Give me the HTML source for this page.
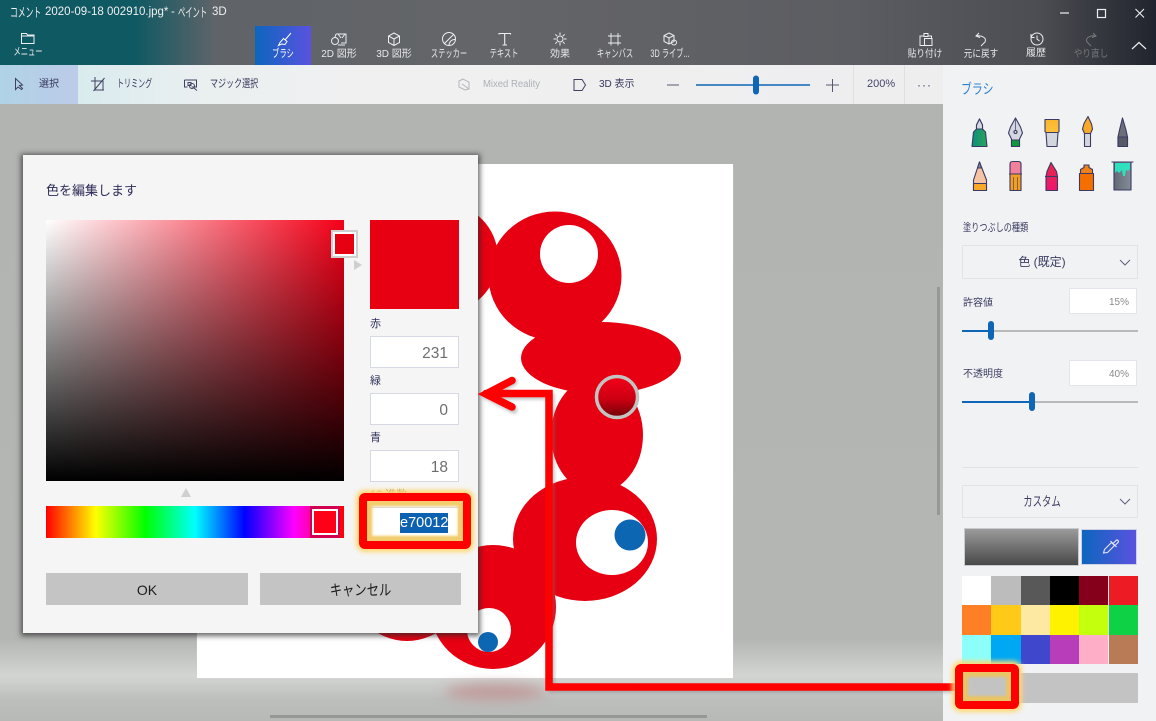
<!DOCTYPE html>
<html lang="ja"><head><meta charset="utf-8"><title>ペイント 3D</title>
<style>
*{box-sizing:border-box}
html,body{margin:0;padding:0;width:1156px;height:721px;overflow:hidden;background:#b3b5b3}
body{font-family:"Liberation Sans","Noto Sans CJK JP",sans-serif;position:relative}
.a{position:absolute}
.t{position:absolute;white-space:nowrap;line-height:1}
.top{left:0;top:0;width:1156px;height:65px;background:linear-gradient(90deg,#0f5963 0,#0f5963 135px,#5f6469 215px,#646568 500px,#5c5d62 850px,#4c4d52 1040px,#20242d 1156px)}
.tab{color:#e8e8ea;font-size:10px;text-align:center;width:60px;top:50px}
.k7{transform:scaleX(.66);font-size:11px}
.k8{transform:scaleX(.86)}
.sub{left:0;top:65px;width:943px;height:39px;background:linear-gradient(90deg,#b9dbe6 0,#d9ebee 75px,#e9eff0 190px,#f0f0f1 350px,#eeeeef 943px)}
.lbl{color:#36365a;font-size:10px;top:80px;transform-origin:0 50%}
.dlg{left:23px;top:155px;width:455px;height:478px;background:#f5f5f5;box-shadow:0 1px 5px 2px rgba(40,40,40,.7)}
.inp{background:#fff;border:1px solid #d6d9e4;left:370px;width:89px;height:32px;color:#6e6e6e;font-size:15.5px;text-align:right;padding:7px 10px 0 0;line-height:20px}
.dl{left:370px;font-size:11px;color:#30305a}
.btn{background:#c4c4c4;height:32px;top:573px;font-size:14px;color:#1c1c1c;text-align:center;line-height:34px}
.pan{left:943px;top:65px;width:213px;height:656px;background:#f1f2f4}
.pl{font-size:10px;color:#3c3c60;transform-origin:0 50%}
.sw{width:29.3px;height:29.3px;position:absolute}
.box{background:#fff;border:1px solid #e3e5ea;color:#8a8a8a;font-size:10px;text-align:right;padding-right:7px;left:1069px;width:68px;height:26px;line-height:27px}
svg{position:absolute;overflow:visible}
</style></head><body>

<!-- canvas bg -->
<div class="a" style="left:0;top:104px;width:943px;height:617px;background:linear-gradient(180deg,#b2b4b2 0,#b4b6b4 535px,#d3d5d2 572px,#bdbfbd 595px,#b7b9b7 617px)"></div>
<div class="a" style="left:197px;top:164px;width:536px;height:514px;background:#fff;box-shadow:0 1px 1px #d5d5d5"></div>
<div class="a" style="left:445px;top:684px;width:100px;height:16px;border-radius:50%;background:#c09a9a;filter:blur(6px)"></div>
<div class="a" style="left:270px;top:715px;width:437px;height:3px;background:#969896"></div>
<div class="a" style="left:937px;top:287px;width:3px;height:228px;background:#969896"></div>

<!-- art -->
<svg style="left:0;top:0" width="1156" height="721" viewBox="0 0 1156 721">
<g fill="#e60012">
<circle cx="443" cy="258" r="55"/>
<circle cx="407" cy="584" r="57"/>
<ellipse cx="555" cy="276" rx="66.500" ry="64.500"/>
<ellipse cx="601" cy="358" rx="80" ry="36"/>
<ellipse cx="597" cy="435" rx="46" ry="58"/>
<ellipse cx="585" cy="539" rx="72" ry="62"/>
<ellipse cx="493" cy="607" rx="63" ry="62"/>
</g>
<circle cx="569" cy="254" r="29" fill="#fff"/>
<ellipse cx="612" cy="542.500" rx="36" ry="32.500" fill="#fff"/>
<circle cx="630" cy="535" r="15.500" fill="#0d66b2"/>
<circle cx="489" cy="630" r="22" fill="#fff"/>
<circle cx="488" cy="642" r="10" fill="#0d66b2"/>
<defs><linearGradient id="g1" x1="0" y1="0" x2="0" y2="1"><stop offset="0" stop-color="#f40018"/><stop offset=".55" stop-color="#cc0012"/><stop offset="1" stop-color="#6e0008"/></linearGradient></defs>
<circle cx="617" cy="397" r="20.500" fill="url(#g1)" stroke="#c2c4c2" stroke-width="3.500"/>
</svg>

<!-- top bar -->
<div class="a top"></div>
<div class="t" style="left:10px;top:6px;color:#f0f0f0;font-size:13px;transform:scaleX(.6);transform-origin:0 50%">コメント</div>
<div class="t" style="left:45px;top:7px;color:#f0f0f0;font-size:11.500px">2020-09-18 002910.jpg*</div>
<div class="t" style="left:171px;top:7px;color:#f0f0f0;font-size:11.500px">-</div>
<div class="t" style="left:178px;top:6px;color:#f0f0f0;font-size:13px;transform:scaleX(.56);transform-origin:0 50%">ペイント</div>
<div class="t" style="left:212px;top:7px;color:#f0f0f0;font-size:11.500px">3D</div>
<div class="a" style="left:255px;top:26px;width:56px;height:39px;background:linear-gradient(90deg,#0c66bd,#5a52e0)"></div>

<svg style="left:0;top:0" width="1156" height="65" viewBox="0 0 1156 65" fill="none" stroke="#eceef0" stroke-width="1">
<path d="M21.500 43.500v-10h5l1 1.500h6.500v8.500zM21.500 36h12.500"/>
<path d="M291 33l-6 7M283.500 38.500l3.500 3-2 3-3.500-.5-3 1.500 1.500-3z" stroke="#fff"/>
<path d="M336 34h10v9h-5M336 34l-1 3M345 34l-3 4M338 34l3 4"/><circle cx="335" cy="41" r="3.500"/>
<path d="M338 45h7"/>
<path d="M394 33l5.500 3v6.500l-5.500 3-5.500-3V36zM388.500 36l5.500 3 5.500-3M394 39v6.500"/>
<circle cx="449" cy="39" r="6.500"/><path d="M444.500 43.500l9-9M449 45.500c0-3 2-6 6-6"/>
<path d="M499 34.500v-1h11.500v1M504.700 33.500v11.500M502.500 45h4.500" stroke-width="1.100"/>
<circle cx="560" cy="39" r="3"/><path d="M560 32.500V35M560 43v2.500M553.500 39h2.500M564 39h2.500M555.400 34.400l1.800 1.800M562.800 41.800l1.800 1.800M564.600 34.400l-1.800 1.800M557.200 41.800l-1.800 1.800"/>
<path d="M611 36h7v7h-7zM611 33v12.500M618 33v12.500M608 36h13M608 43h13" stroke-width=".9"/>
<path d="M669 33l5 2.500v6l-5 2.500-5-2.500v-6zM664 35.500l5 2.500 5-2.500M669 38v6"/><circle cx="674" cy="42.500" r="2.500"/>
<path d="M923.500 36h-3.500v9.500h4M924 33.500h4v3h-4zM928.500 36h3v2M924.500 38.500h7.500v7h-7.500z"/>
<path d="M979 33l-3 3 4 1.500M976 36c6-1 11 2 9 6l-4 4"/>
<circle cx="1037" cy="39" r="6"/><path d="M1031 34v3.500h3.500M1037 35.500v3.500l2.500 2"/>
<path d="M1093 33l3 3-4 1.500M1096 36c-6-1-11 2-9 6l4 4" stroke="#77797d"/>
<path d="M1132 49l7-6.500 7 6.500" stroke-width="1.200"/>
<path d="M1060 13h9" stroke-width="1.200"/><rect x="1097.500" y="9.500" width="8" height="8" stroke-width="1.200"/><path d="M1144 9l-8.500 8.500M1135.500 9l8.500 8.500" stroke-width="1.100"/>
</svg>

<div class="t tab k7" style="left:-2px;top:47px">メニュー</div>
<div class="t tab k7" style="left:253px;top:49px;color:#fff">ブラシ</div>
<div class="t tab" style="left:309px;top:50px">2D 図形</div>
<div class="t tab" style="left:364px;top:50px">3D 図形</div>
<div class="t tab k7" style="left:419px;top:49px">ステッカー</div>
<div class="t tab k7" style="left:474px;top:49px">テキスト</div>
<div class="t tab" style="left:530px;top:50px">効果</div>
<div class="t tab k7" style="left:585px;top:49px">キャンバス</div>
<div class="t tab k7" style="left:640px;top:49px">3D ライブ...</div>
<div class="t tab k8" style="left:895px;top:50px">貼り付け</div>
<div class="t tab k8" style="left:951px;top:50px">元に戻す</div>
<div class="t tab" style="left:1006px;top:49px">履歴</div>
<div class="t tab k8" style="left:1061px;top:50px;color:#74767a">やり直し</div>

<!-- sub bar -->
<div class="a sub"></div>
<div class="a" style="left:0;top:65px;width:78px;height:39px;background:linear-gradient(90deg,#b0d3e6,#bccbe9)"></div>
<div class="a" style="left:853px;top:65px;width:1px;height:39px;background:#dfe0e3"></div>
<div class="a" style="left:904px;top:65px;width:1px;height:39px;background:#dfe0e3"></div>
<div class="t lbl" style="left:39px">選択</div>
<div class="t lbl" style="left:117px;font-size:11px;top:79px;transform:scaleX(.64)">トリミング</div>
<div class="t lbl" style="left:210px;font-size:11px;top:79px;transform:scaleX(.73)">マジック選択</div>
<div class="t lbl" style="left:483px;color:#aeb0b6;transform:scaleX(.95)">Mixed Reality</div>
<div class="t lbl" style="left:599px">3D 表示</div>
<div class="t" style="left:867px;top:79px;color:#45456a;font-size:11px;width:30px">200%</div>
<div class="t" style="left:917px;top:79px;color:#45456a;font-size:12px;letter-spacing:1px">···</div>
<svg style="left:0;top:65px" width="943" height="39" viewBox="0 65 943 39" fill="none" stroke="#40405f" stroke-width="1">
<path d="M15.500 78.500v11l2.500-2.500 3.500 2.500 1-1-3-3 3-.5z"/>
<path d="M91 81h12v9M95 77v13h9M104.500 78l-11 13"/>
<path d="M184.500 80h12v7h-5M184.500 80v7h3M188 82.500h3v3h-3z"/><circle cx="192" cy="86" r="2.500"/><path d="M194 88l3 2.500"/>
<path d="M459 81l4-2 6 3v7l-4 1-6-3zM462 84l7 5" stroke="#b4b6bc"/>
<path d="M574 79.500h8l3.500 5.500-3.500 5.500h-8z"/>
<path d="M667 85h12" stroke="#555a70"/>
<path d="M826 85h13M832.500 79v13" stroke="#555a70"/>
<path d="M696 85h114" stroke="#0f66b6" stroke-width="1.500"/>
<rect x="753" y="75.500" width="6" height="19" rx="3" fill="#0f66b6" stroke="none"/>
</svg>

<!-- panel -->
<div class="a pan"></div>
<div class="t" style="left:961px;top:82px;color:#2e82cc;font-size:14px;transform:scaleX(.78);transform-origin:0 50%">ブラシ</div>

<svg style="left:943px;top:65px" width="213" height="656" viewBox="943 65 213 656" stroke="#3a3a64" stroke-width="1.100" stroke-linejoin="round">
<defs>
<linearGradient id="gg" x1="0" x2="1"><stop offset="0" stop-color="#0d8f7a"/><stop offset="1" stop-color="#2aa35e"/></linearGradient>
<linearGradient id="gy" x1="0" y1="0" x2="0" y2="1"><stop offset="0" stop-color="#f9b62f"/><stop offset="1" stop-color="#fdc13d"/></linearGradient>
<linearGradient id="gp" x1="0" y1="0" x2="0" y2="1"><stop offset="0" stop-color="#e42a4c"/><stop offset="1" stop-color="#f01470"/></linearGradient>
<linearGradient id="gb" x1="0" x2="1"><stop offset="0" stop-color="#5b6470"/><stop offset="1" stop-color="#8a929c"/></linearGradient>
</defs>
<path d="M979.500 119l-3 6v4l-3 3-1.500 14.500h15L985.500 132l-3-3v-4z" fill="url(#gg)"/><path d="M979.500 119l-3 6v4h6v-4z" fill="#d7d9e2"/>
<path d="M1015.500 118l-5 9-2 6 3 6v7.500h8V139l3-6-2-6z" fill="#d4d6df"/><path d="M1011.500 140h8v6.500h-8z" fill="#0f9a3a"/><circle cx="1015.500" cy="132" r="1.500" fill="none"/><path d="M1015.500 119v11.500" stroke-width=".7"/>
<path d="M1045 119.500h14v12l-1 1h-12l-1-1z" fill="url(#gy)"/><path d="M1046 132.500h12l-1 14h-10z" fill="#d4d6de"/>
<path d="M1088 116.500l-4 7-1.500 5.500 2 4.500h6l2-4.500-1-5z" fill="#f9a92a"/><path d="M1084.500 133.500h6v13h-6z" fill="#d4d6de"/>
<path d="M1122.500 118l-3 12-1.500 7v9.500h9.500V137l-1.500-7z" fill="#6b6f7c"/><path d="M1118 137h9.500v9.500H1118z" fill="#565a66"/>
<path d="M979.500 162l-6 18v10.500h13V180z" fill="#f6c4a2"/><path d="M973.500 183.500h13v7h-13z" fill="#f9a92a"/><path d="M977.500 168l2-6 2 6z" fill="#8a8ea0"/>
<path d="M1010 164q0-2.500 2.500-2.500h6q2.500 0 2.500 2.500v10h-11z" fill="#f27f9c"/><path d="M1009 174h13M1010 174v16.500h11V174z" fill="#f49e22"/><path d="M1013.500 177v13.500M1017.500 177v13.500" stroke-width=".6" fill="none"/>
<path d="M1051 162.500l-4 9-1 5v14h11.500v-14l-1-5z" fill="url(#gp)"/><path d="M1045 176.500h13" fill="none"/>
<path d="M1084 165h5v2.500l3.500 2v4h-12v-4l3.500-2z" fill="#f08018"/><path d="M1079.500 173.500h14v17h-14z" fill="#f56e00"/>
<path d="M1111.500 162h22M1114 162v28h17v-28z" fill="url(#gb)"/><path d="M1115 163h15v6l-2 2-2-1-1 6-2 0-1-6-3 3-2-2-2 2z" fill="#2ee0bd" stroke="none"/>
</svg>

<div class="t pl" style="left:963px;top:223px;font-size:11px;transform:scaleX(.74)">塗りつぶしの種類</div>
<div class="a" style="left:962px;top:245px;width:176px;height:34px;border:1px solid #e1e3e9"></div>
<div class="t" style="left:962px;top:256px;width:160px;text-align:center;color:#3c3c60;font-size:12px">色 (既定)</div>
<div class="t pl" style="left:963px;top:299px">許容値</div>
<div class="a box" style="top:288px">15%</div>
<div class="t pl" style="left:963px;top:370px">不透明度</div>
<div class="a box" style="top:360px">40%</div>
<div class="a" style="left:962px;top:330px;width:176px;height:2px;background:#b9b9b9"></div>
<div class="a" style="left:962px;top:330px;width:29px;height:2px;background:#0f66b6"></div>
<div class="a" style="left:988px;top:321px;width:6px;height:19px;border-radius:3px;background:#0f66b6"></div>
<div class="a" style="left:962px;top:401px;width:176px;height:2px;background:#b9b9b9"></div>
<div class="a" style="left:962px;top:401px;width:70px;height:2px;background:#0f66b6"></div>
<div class="a" style="left:1029px;top:392px;width:6px;height:19px;border-radius:3px;background:#0f66b6"></div>
<div class="a" style="left:962px;top:467px;width:176px;height:1px;background:#e1e3e7"></div>
<div class="a" style="left:962px;top:485px;width:176px;height:33px;border:1px solid #e1e3e9"></div>
<div class="t" style="left:962px;top:495px;width:160px;text-align:center;color:#3c3c60;font-size:13px;transform:scaleX(.72)">カスタム</div>
<svg style="left:0;top:0" width="1156" height="721" viewBox="0 0 1156 721" fill="none" stroke="#5f6080" stroke-width="1">
<path d="M1120 260l5 5 5-5M1120 499l5 5 5-5"/>
</svg>
<div class="a" style="left:964px;top:528px;width:115px;height:38px;background:linear-gradient(180deg,#9b9b9b,#484848);border:1px solid #c9cbce"></div>
<div class="a" style="left:1081px;top:529px;width:56px;height:36px;background:linear-gradient(90deg,#0c66bd,#5a52e0);border:1px solid #cfd2e2"></div>
<svg style="left:0;top:0" width="1156" height="721" viewBox="0 0 1156 721" fill="none" stroke="#e6e8f5" stroke-width="1.100">
<path d="M1103.500 553l1-3.500 7-7 3 3-7 7zM1110.500 541l6 6M1113.500 543l2.500-2.500q1-1 2 0t0 2L1115.500 545"/>
</svg>
<div class="a" style="left:962px;top:576px;width:176px;height:88px">
<div class="sw" style="left:0;top:0;background:#fff"></div><div class="sw" style="left:29.300px;top:0;background:#bcbcbc"></div><div class="sw" style="left:58.600px;top:0;background:#585858"></div><div class="sw" style="left:87.900px;top:0;background:#000"></div><div class="sw" style="left:117.200px;top:0;background:#85001b"></div><div class="sw" style="left:146.500px;top:0;background:#ed1c24"></div>
<div class="sw" style="left:0;top:29.300px;background:#ff7f27"></div><div class="sw" style="left:29.300px;top:29.300px;background:#ffc918"></div><div class="sw" style="left:58.600px;top:29.300px;background:#fde9a1"></div><div class="sw" style="left:87.900px;top:29.300px;background:#fff200"></div><div class="sw" style="left:117.200px;top:29.300px;background:#c4ff0e"></div><div class="sw" style="left:146.500px;top:29.300px;background:#0ed145"></div>
<div class="sw" style="left:0;top:58.600px;background:#8cfffb"></div><div class="sw" style="left:29.300px;top:58.600px;background:#00a8f3"></div><div class="sw" style="left:58.600px;top:58.600px;background:#3f48cc"></div><div class="sw" style="left:87.900px;top:58.600px;background:#b83dba"></div><div class="sw" style="left:117.200px;top:58.600px;background:#ffaec8"></div><div class="sw" style="left:146.500px;top:58.600px;background:#b97a56"></div>
</div>
<div class="a" style="left:962px;top:673px;width:176px;height:30px;background:#c3c3c3"></div>

<!-- dialog -->
<div class="a dlg"></div>
<div class="t" style="left:46px;top:184px;font-size:13px;color:#2c2c58">色を編集します</div>
<div class="a" style="left:46px;top:220px;width:298px;height:261px;background:linear-gradient(180deg,rgba(0,0,0,0),#000),linear-gradient(90deg,#fff,#f50018)"></div>
<div class="a" style="left:331px;top:230px;width:27px;height:28px;border:2px solid #cfcfcf;background:#fff;padding:2px"><div style="width:100%;height:100%;background:#e60012"></div></div>
<div class="a" style="left:354px;top:260px;width:0;height:0;border-left:8px solid #cfcfcf;border-top:5px solid transparent;border-bottom:5px solid transparent"></div>
<div class="a" style="left:181px;top:488px;width:0;height:0;border-bottom:9px solid #cfcfcf;border-left:5px solid transparent;border-right:5px solid transparent"></div>
<div class="a" style="left:46px;top:506px;width:298px;height:32px;background:linear-gradient(90deg,#f00 0,#ff0 16.660%,#0f0 33.330%,#0ff 50%,#00f 66.660%,#f0f 83.330%,#f00 100%)"></div>
<div class="a" style="left:310px;top:506px;width:30px;height:32px;background:#d0004e"></div>
<div class="a" style="left:312px;top:509px;width:26px;height:26px;border:2px solid #fff;background:#ff0018"></div>
<div class="a" style="left:370px;top:220px;width:89px;height:89px;background:#e60012"></div>
<div class="t dl" style="top:319px">赤</div>
<div class="a inp" style="top:336px">231</div>
<div class="t dl" style="top:376px">緑</div>
<div class="a inp" style="top:393px">0</div>
<div class="t dl" style="top:433px">青</div>
<div class="a inp" style="top:450px">18</div>
<div class="t dl" style="top:490px;color:#9a8a50">16 進数</div>
<div class="a" style="left:370px;top:507px;width:89px;height:31px;background:#fff;border:1px solid #d6d9e4"></div>
<div class="t" style="left:400px;top:513px;height:20px;width:48px;background:#0c62b0;color:#fff;font-size:14.500px;line-height:21px;text-align:center">e70012</div>
<div class="a btn" style="left:46px;width:202px">OK</div>
<div class="a btn" style="left:260px;width:201px"><span style="display:inline-block;transform:scaleX(.82);font-size:15px">キャンセル</span></div>

<!-- red annotations -->
<svg style="left:0;top:0" width="1156" height="721" viewBox="0 0 1156 721" fill="none">
<defs><filter id="gl" x="-30%" y="-30%" width="160%" height="160%"><feGaussianBlur stdDeviation="2.500"/></filter>
<filter id="sh" x="-5%" y="-5%" width="110%" height="110%"><feGaussianBlur stdDeviation="1.500"/></filter></defs>
<path d="M955 689H551V396H486M514 382L487 396L514 410" stroke="#777" stroke-width="7" stroke-linejoin="round" stroke-linecap="round" opacity=".45" filter="url(#sh)"/>
<path d="M955 687H549V393.500H486M512 380.500L486 394L512 407" stroke="#ff0000" stroke-width="7.500" stroke-linejoin="miter" stroke-linecap="round"/>
<rect x="363" y="497" width="104" height="48" rx="2" stroke="#ffd873" stroke-width="14" filter="url(#gl)"/>
<rect x="363" y="497" width="104" height="48" rx="2" stroke="#ff0000" stroke-width="8"/>
<rect x="959" y="668" width="56" height="37" rx="2" stroke="#ffd873" stroke-width="14" filter="url(#gl)"/>
<rect x="959" y="668" width="56" height="37" rx="2" stroke="#ff0000" stroke-width="8"/>
</svg>
<div class="a" style="left:367px;top:501px;width:96px;height:40px;box-shadow:inset 0 0 2px 5px #f2cd6e"></div>
<div class="a" style="left:963px;top:672px;width:48px;height:29px;background:#c3c3c3;box-shadow:inset 0 0 2px 5px #e9c566"></div>
</body></html>
